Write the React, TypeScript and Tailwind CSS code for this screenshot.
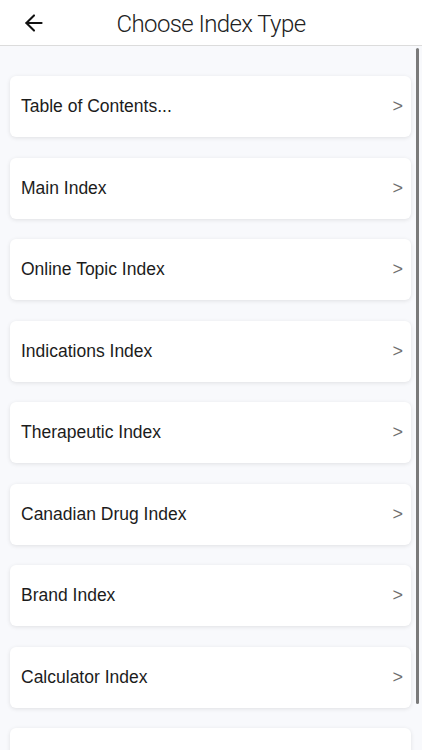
import { ArrowLeft } from 'lucide-react';

const ITEMS = [
  "Table of Contents...",
  "Main Index",
  "Online Topic Index",
  "Indications Index",
  "Therapeutic Index",
  "Canadian Drug Index",
  "Brand Index",
  "Calculator Index",
  "",
];

export default function App() {
  return (
    <div className="relative w-[422px] h-[750px] overflow-hidden bg-[#f8f9fc] font-['Liberation_Sans',Arial,sans-serif]">
      {/* Header */}
      <div className="h-[46px] bg-white border-b border-[#dcdcdc] flex items-center relative">
        <button className="absolute left-[21px] top-[10px] text-[#111]">
          <ArrowLeft className="w-[26px] h-[26px]" strokeWidth={1.9} />
        </button>
        <h1 className="w-full text-center text-[24px] font-light text-[#222] font-['Roboto',sans-serif] tracking-[-0.6px] leading-none pt-[2px]">
          Choose Index Type
        </h1>
      </div>

      {/* List */}
      <div className="flex flex-col gap-[20.5px] pt-[30px] px-[10px] pr-[11px]">
        {ITEMS.map((item, i) => (
          <div
            key={i}
            className="h-[61px] shrink-0 bg-white rounded-[6px] shadow-[0_1px_4px_rgba(0,0,0,0.1)] flex items-center justify-between pl-[11px] pr-[8px]"
          >
            <span className="text-[17.5px] text-[#1c1c1c]">{item}</span>
            {item && <span className="text-[18px] text-[#707070]">&gt;</span>}
          </div>
        ))}
      </div>

      {/* Scrollbar */}
      <div className="absolute left-[416px] top-[48px] w-[3px] h-[656px] rounded-full bg-[#7a7a7a]" />
    </div>
  );
}
